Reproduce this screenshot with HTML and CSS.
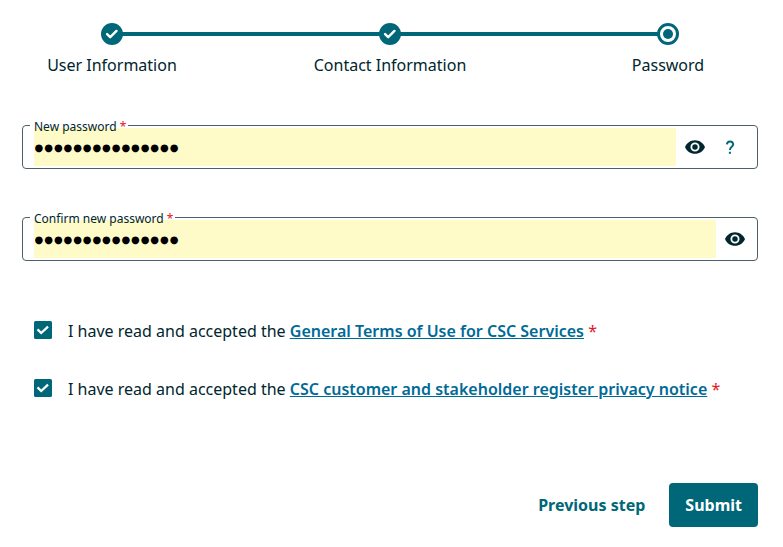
FILE: index.html
```html
<!DOCTYPE html>
<html lang="en">
<head>
<meta charset="utf-8">
<title>Password</title>
<link rel="stylesheet" href="styles.css">
</head>
<body>
<main class="page">
  <ol class="stepper">
    <li class="step">
      <svg class="dot" viewBox="0 0 22 22"><circle cx="11" cy="11" r="11" fill="#006778"/><path d="M6.1 11.1l3.1 3.1 6.3-6.3" fill="none" stroke="#fff" stroke-width="2.4" stroke-linecap="round" stroke-linejoin="round"/></svg>
      <span>User Information</span>
    </li>
    <li class="step">
      <svg class="dot" viewBox="0 0 22 22"><circle cx="11" cy="11" r="11" fill="#006778"/><path d="M6.1 11.1l3.1 3.1 6.3-6.3" fill="none" stroke="#fff" stroke-width="2.4" stroke-linecap="round" stroke-linejoin="round"/></svg>
      <span>Contact Information</span>
    </li>
    <li class="step">
      <svg class="dot" viewBox="0 0 22 22"><circle cx="11" cy="11" r="9.5" fill="#fff" stroke="#006778" stroke-width="3"/><circle cx="11" cy="11" r="5" fill="#006778"/></svg>
      <span>Password</span>
    </li>
  </ol>

  <form class="form">
    <div class="field">
      <label class="label" for="new">New password <b class="req">*</b></label>
      <input class="input" id="new" type="text" value="●●●●●●●●●●●●●●●">
      <div class="tools">
        <svg class="eye" viewBox="1 4.5 22 15"><path fill="#00262e" fill-rule="evenodd" d="M12 4.5C7 4.5 2.73 7.61 1 12c1.73 4.39 6 7.5 11 7.5s9.27-3.11 11-7.5c-1.73-4.39-6-7.5-11-7.5zM12 17a5 5 0 1 1 0-10 5 5 0 0 1 0 10zm0-8a3 3 0 1 0 0 6 3 3 0 0 0 0-6z"/></svg>
        <svg class="help" viewBox="0 0 10 14"><path d="M1.9 4.4A3.2 3.3 0 0 1 8.2 4.2C8.2 6.8 4.9 6.7 4.9 10" fill="none" stroke="#006778" stroke-width="1.9"/><path d="M3.9 11.8h2v2h-2z" fill="#006778"/></svg>
      </div>
    </div>
    <div class="field">
      <label class="label" for="confirm">Confirm new password <b class="req">*</b></label>
      <input class="input" id="confirm" type="text" value="●●●●●●●●●●●●●●●">
      <div class="tools">
        <svg class="eye" viewBox="1 4.5 22 15"><path fill="#00262e" fill-rule="evenodd" d="M12 4.5C7 4.5 2.73 7.61 1 12c1.73 4.39 6 7.5 11 7.5s9.27-3.11 11-7.5c-1.73-4.39-6-7.5-11-7.5zM12 17a5 5 0 1 1 0-10 5 5 0 0 1 0 10zm0-8a3 3 0 1 0 0 6 3 3 0 0 0 0-6z"/></svg>
      </div>
    </div>

    <div class="checks">
      <div class="check">
        <svg class="box" viewBox="0 0 18 18"><rect width="18" height="18" rx="1.5" fill="#006778"/><path d="M4.3 9.2l2.9 2.8 6-5.6" fill="none" stroke="#fff" stroke-width="2.3" stroke-linecap="square"/></svg>
        <span>I have read and accepted the <a class="link" href="#">General Terms of Use for CSC Services</a> <b class="req">*</b></span>
      </div>
      <div class="check">
        <svg class="box" viewBox="0 0 18 18"><rect width="18" height="18" rx="1.5" fill="#006778"/><path d="M4.3 9.2l2.9 2.8 6-5.6" fill="none" stroke="#fff" stroke-width="2.3" stroke-linecap="square"/></svg>
        <span>I have read and accepted the <a class="link" href="#">CSC customer and stakeholder register privacy notice</a> <b class="req">*</b></span>
      </div>
    </div>

    <div class="actions">
      <button class="btn" type="button">Previous step</button>
      <button class="btn primary" type="button">Submit</button>
    </div>
  </form>
</main>
</body>
</html>
```
FILE: styles.css
```css
* { box-sizing: border-box; }
body {
  margin: 0;
  background: #fff;
  color: #00262e;
  font: 16px/24px "Noto Sans", sans-serif;
}
svg { display: block; flex: none; }
.page { width: 736px; margin: 0 0 0 22px; padding-top: 23px; }
.stepper {
  position: relative;
  display: flex;
  justify-content: space-between;
  margin: 0;
  padding: 0;
  list-style: none;
}
.stepper::before {
  content: "";
  position: absolute;
  top: 9px;
  left: 90px;
  right: 90px;
  height: 4px;
  background: #006778;
}
.step {
  position: relative;
  display: flex;
  flex-direction: column;
  align-items: center;
  gap: 8px;
  width: 180px;
}
.dot { width: 22px; height: 22px; }
.form { margin-top: 48px; }
.field {
  position: relative;
  display: flex;
  align-items: center;
  height: 44px;
  margin-bottom: 48px;
  padding: 0 11px;
  border: 1px solid #4d6068;
  border-radius: 4px;
}
.label {
  position: absolute;
  top: -8px;
  left: 7px;
  padding: 0 2px 0 4px;
  font-size: 12px;
  line-height: 18px;
  background: linear-gradient(#fff, #fff) 0 7px / 100% 1px no-repeat;
}
.req { color: #e6141e; font-weight: 400; }
.input {
  flex: 1;
  min-width: 0;
  height: 38px;
  padding: 0 0 0 0.6px;
  border: 0;
  outline: 0;
  background: #fffbc8;
  color: #000;
  font: 10px/24px "DejaVu Sans", sans-serif;
  letter-spacing: 0.92px;
}
.tools { display: flex; align-items: center; gap: 20px; padding: 0 1px 0 9px; }
.eye { width: 20px; height: 14px; }
.help { width: 10px; height: 14px; margin-right: 10px; }
.checks {
  display: flex;
  flex-direction: column;
  gap: 34px;
  margin-top: 58px;
  padding-left: 12px;
}
.check { display: flex; align-items: center; gap: 16px; }
.box { width: 18px; height: 18px; margin-top: -2px; }
.link { color: #006a97; font-weight: 600; text-decoration: underline; }
.actions { display: flex; justify-content: flex-end; gap: 8px; margin-top: 82px; }
.btn {
  height: 44px;
  padding: 0 16px;
  border: 0;
  border-radius: 4px;
  background: none;
  color: #006778;
  font: 700 16px/24px "Noto Sans", sans-serif;
}
.primary { background: #006778; color: #fff; }
```
